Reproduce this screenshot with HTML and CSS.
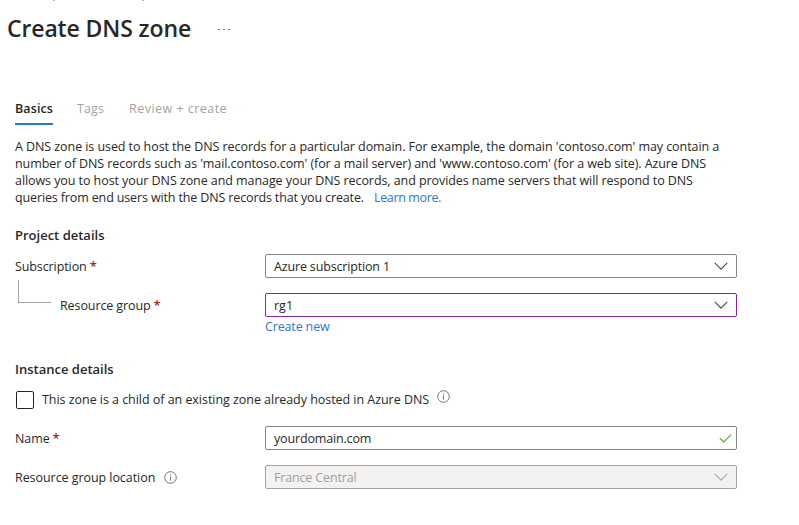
FILE: index.html
```
<!DOCTYPE html>
<html lang="en">
<head>
<meta charset="utf-8">
<title>Create DNS zone</title>
<link rel="stylesheet" href="styles.css">
</head>
<body>
<div class="crumb-edge"><i></i><i></i></div>
<header class="header">
  <h1>Create DNS zone</h1>
  <span class="more"><i></i><i></i><i></i></span>
</header>
<nav class="tabs">
  <a class="tab active">Basics</a>
  <a class="tab tags">Tags</a>
  <a class="tab review">Review + create</a>
</nav>
<main>
  <p class="intro">
    <span class="l1">A DNS zone is used to host the DNS records for a particular domain. For example, the domain 'contoso.com' may contain a</span><br>
    <span class="l2">number of DNS records such as 'mail.contoso.com' (for a mail server) and 'www.contoso.com' (for a web site). Azure DNS</span><br>
    <span class="l3">allows you to host your DNS zone and manage your DNS records, and provides name servers that will respond to DNS</span><br>
    <span class="l4">queries from end users with the DNS records that you create.</span><a class="link learn">Learn more.</a>
  </p>
  <h2>Project details</h2>
  <div class="row">
    <label class="label sub">Subscription <b>*</b></label>
    <div class="field">Azure subscription 1
      <svg class="chevron" width="14" height="8" viewBox="0 0 14 8"><path d="M.8 .9 7 7.1 13.2 .9"/></svg></div>
  </div>
  <div class="row nested">
    <span class="elbow"></span>
    <label class="label">Resource group <b>*</b></label>
    <div class="field focus">rg1
      <svg class="chevron" width="14" height="8" viewBox="0 0 14 8"><path d="M.8 .9 7 7.1 13.2 .9"/></svg></div>
  </div>
  <a class="link create">Create new</a>
  <h2 class="instance">Instance details</h2>
  <div class="check-row">
    <span class="box"></span>
    <span class="check-label">This zone is a child of an existing zone already hosted in Azure DNS</span>
    <svg class="info raised" width="13" height="13" viewBox="0 0 13 13"><circle cx="6.5" cy="6.5" r="5.8"/><path d="M6.5 5.5v4M6.5 3.2v1.2"/></svg>
  </div>
  <div class="row">
    <label class="label">Name <b>*</b></label>
    <div class="field domain">yourdomain.com
      <svg class="valid" width="13" height="9" viewBox="0 0 13 9"><path d="M.8 4.3 4.6 8 12.2.6"/></svg></div>
  </div>
  <div class="row last">
    <label class="label">Resource group location
      <svg class="info" width="13" height="13" viewBox="0 0 13 13"><circle cx="6.5" cy="6.5" r="5.8"/><path d="M6.5 5.5v4M6.5 3.2v1.2"/></svg></label>
    <div class="field disabled">France Central
      <svg class="chevron" width="14" height="8" viewBox="0 0 14 8"><path d="M.8 .9 7 7.1 13.2 .9"/></svg></div>
  </div>
</main>
</body>
</html>
```
FILE: styles.css
```
* { box-sizing: border-box; }
body {
  margin: 0;
  height: 525px;
  overflow: hidden;
  background: #fff;
  color: #292827;
  font: 12.5px/17px "Open Sans", "Noto Sans", sans-serif;
  letter-spacing: -0.1px;
}
svg { fill: none; flex: none; }
.crumb-edge { display: flex; gap: 87px; height: 1px; padding-left: 53px; }
.crumb-edge i { width: 2px; background: #bbb; }
.header { display: flex; align-items: center; height: 56px; padding-left: 7px; }
h1 { margin: 0; width: 211px; padding-bottom: 2px; font-size: 23px; line-height: 32px; font-weight: 600; letter-spacing: -0.12px; }
.more { display: flex; gap: 3px; }
.more i { width: 2px; height: 1px; background: #77757a; }
.tabs { display: flex; height: 68px; padding: 43px 0 0 15px; color: #a5a3a1; }
.tab { height: 25px; }
.active { width: 38px; margin-right: 24px; color: #252423; font-weight: 600; letter-spacing: 0.1px; border-bottom: 2px solid #2078d4; }
.tags { width: 52px; letter-spacing: 0.1px; }
.review { letter-spacing: 0.47px; }
main { padding: 13px 0 0 15px; }
.intro { margin: 0 0 21px; white-space: nowrap; }
.l1 { letter-spacing: -0.07px; }
.l2 { letter-spacing: -0.085px; }
.l3 { letter-spacing: -0.07px; }
.l4 { letter-spacing: -0.135px; }
.link { color: #2f78cc; }
.learn { margin-left: 10px; letter-spacing: -0.36px; }
h2 { margin: 0 0 10px; font-size: 13px; line-height: 17px; font-weight: 600; letter-spacing: 0; }
.row { display: flex; align-items: center; height: 24px; margin-bottom: 15px; }
.label { display: flex; align-items: center; width: 250px; }
.label b { margin-left: 3px; color: #a4262c; font-size: 13px; font-weight: 600; }
.field {
  display: flex; align-items: center; justify-content: space-between;
  width: 472px; height: 24px; padding: 0 8px;
  border: 1px solid #858381; border-radius: 2px; letter-spacing: -0.16px;
}
.focus { border-color: #8327a8; letter-spacing: 0; }
.disabled { background: #f3f2f1; border-color: #a5a3a1; color: #a19f9d; }
.chevron { stroke: #4c4a48; stroke-width: 1.1; }
.disabled .chevron { stroke: #a9a7a5; }
.valid { margin-right: -4px; stroke: #6bb344; stroke-width: 1.3; }
.nested { margin-bottom: 1px; }
.elbow { align-self: flex-start; width: 33px; height: 23px; margin: -13px 9px 0 3px; border: solid #a5a3a1; border-width: 0 0 1px 1px; }
.nested .label { width: 205px; }
.create { display: block; width: 65px; margin-left: 250px; letter-spacing: -0.15px; white-space: nowrap; }
.instance { margin: 26px 0 13px; }
.check-row { display: flex; align-items: center; height: 18px; margin-bottom: 17px; }
.box { width: 18px; height: 18px; margin: 0 8px 0 1px; border: 1px solid #252423; border-radius: 2px; }
.check-label { padding-bottom: 2px; letter-spacing: -0.04px; white-space: nowrap; }
.info { margin-left: 9px; stroke: #767472; stroke-width: 1; }
.raised { margin: -8px 0 0 8px; }
.last .label { letter-spacing: -0.06px; }
```
